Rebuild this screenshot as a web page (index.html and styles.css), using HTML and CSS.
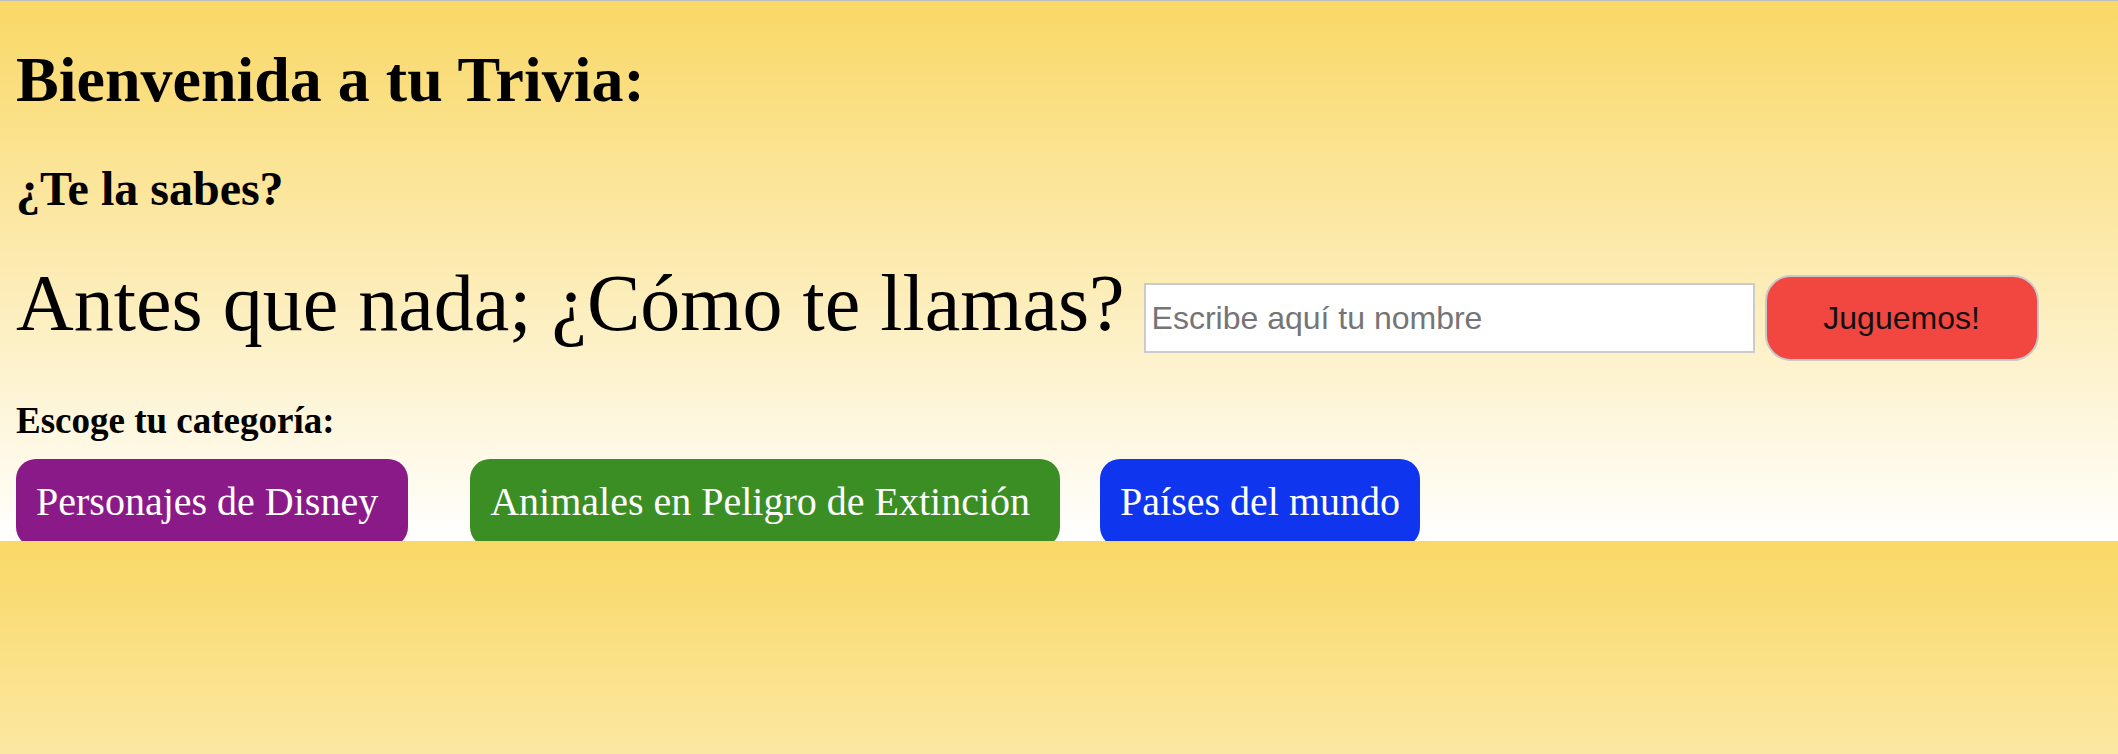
FILE: index.html
```html
<!DOCTYPE html>
<html lang="es">
<head>
<meta charset="utf-8">
<title>Trivia</title>
<link rel="stylesheet" href="styles.css">
</head>
<body>
<h1 class="title">Bienvenida a tu Trivia:</h1>
<h2 class="subtitle">¿Te la sabes?</h2>
<div class="name-row">
  <p class="question">Antes que nada; ¿Cómo te llamas?</p>
  <input class="name-input" type="text" placeholder="Escribe aquí tu nombre">
  <button class="play-btn" type="button">Juguemos!</button>
</div>
<h3 class="cat-label">Escoge tu categoría:</h3>
<div class="categories"><a class="cat cat-disney" href="#">Personajes de Disney</a><a class="cat cat-animals" href="#">Animales en Peligro de Extinción</a><a class="cat cat-countries" href="#">Países del mundo</a></div>
</body>
</html>
```
FILE: styles.css
```css
html {
  margin: 0;
  padding: 0;
}

body {
  margin: 0;
  padding: 0 16px 16px;
  font-family: "Liberation Serif", "Times New Roman", serif;
  color: #000;
  background: linear-gradient(180deg, #f9d866 0%, #ffffff 100%);
}

body::before {
  content: "";
  position: fixed;
  top: 0;
  left: 0;
  right: 0;
  height: 1px;
  background: #bdbdbd;
}

.title {
  margin: 43px 0 0;
  font-size: 64px;
  font-weight: bold;
  line-height: normal;
}

.subtitle {
  margin: 44px 0 0;
  font-size: 48px;
  font-weight: bold;
  line-height: normal;
}

.name-row {
  display: flex;
  align-items: flex-start;
  margin-top: 42px;
}

.question {
  margin: 0 19px 0 0;
  font-size: 80px;
  line-height: normal;
}

.name-input {
  box-sizing: border-box;
  width: 611px;
  height: 70px;
  margin: 25px 10px 0 0;
  padding: 0 6px;
  border: 2px solid #cbcbcb;
  background: #fff;
  font-family: "Liberation Sans", Arial, sans-serif;
  font-size: 32px;
  color: #000;
  outline: none;
}

.name-input::placeholder {
  color: #757575;
}

.play-btn {
  box-sizing: border-box;
  width: 274px;
  height: 86px;
  margin-top: 17px;
  border: 2px solid #c9c9c9;
  border-radius: 26px;
  background: #f24641;
  color: #111;
  font-family: "Liberation Sans", Arial, sans-serif;
  font-size: 32px;
  cursor: pointer;
}

.cat-label {
  margin: 38px 0 0;
  font-size: 37px;
  font-weight: bold;
  line-height: normal;
}

.categories {
  margin-top: 36px;
  font-size: 40px;
  line-height: normal;
}

.cat {
  padding: 20px 20px 23px;
  border-radius: 20px;
  color: #fff;
  text-decoration: none;
}

.cat-disney {
  background: #8b1a89;
  padding-right: 30px;
  margin-right: 62px;
}

.cat-animals {
  background: #3b8e24;
  padding-right: 30px;
  margin-right: 40px;
}

.cat-countries {
  background: #0f35ee;
}
```
